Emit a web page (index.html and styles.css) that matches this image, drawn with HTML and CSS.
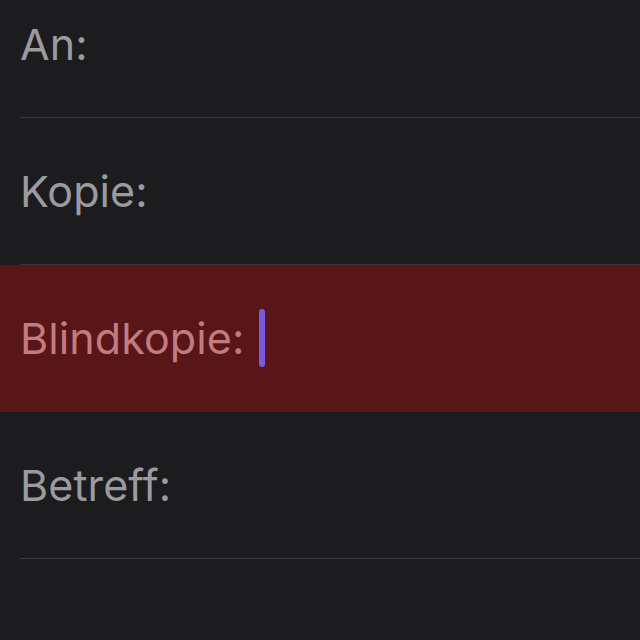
FILE: index.html
```html
<!DOCTYPE html>
<html lang="de">
<head>
  <meta charset="UTF-8">
  <meta name="viewport" content="width=device-width, initial-scale=1.0">
  <title>Neue E-Mail</title>
  <link rel="stylesheet" href="styles.css">
</head>
<body>
  <!-- Header fields of a new mail -->
  <div class="fields">
    <div class="row">
      <div class="field"><span class="label">An:</span></div>
    </div>
    <div class="row">
      <div class="field"><span class="label">Kopie:</span></div>
    </div>
    <div class="row active">
      <div class="field"><span class="label">Blindkopie:</span><span class="caret"></span></div>
    </div>
    <div class="row">
      <div class="field"><span class="label">Betreff:</span></div>
    </div>
    <div class="row">
      <div class="field"></div>
    </div>
  </div>
</body>
</html>
```

FILE: styles.css
```css
/* Dark mail composer header */
body {
  font-family: Inter, 'Liberation Sans', sans-serif;
  background-color: #1c1c1e;
  margin: 0;
  padding: 0;
  height: 640px;
  overflow: hidden;
}
.fields {
  margin-top: -29px;
}
.row {
  padding-left: 20px;
}
.field {
  height: 146px;
  border-bottom: 1px solid #38383a;
  display: flex;
  align-items: center;
}
.label {
  color: #9a9a9f;
  font-size: 43px;
  letter-spacing: 0.1px;
}
.row.active {
  background-color: #581619;
}
.row.active .field {
  border-bottom-color: #581619;
}
.row.active .label {
  color: #c27c7f;
}
.caret {
  width: 6px;
  height: 58px;
  margin-left: 15px;
  border-radius: 3px;
  background-color: #7a5ae0;
}
```
